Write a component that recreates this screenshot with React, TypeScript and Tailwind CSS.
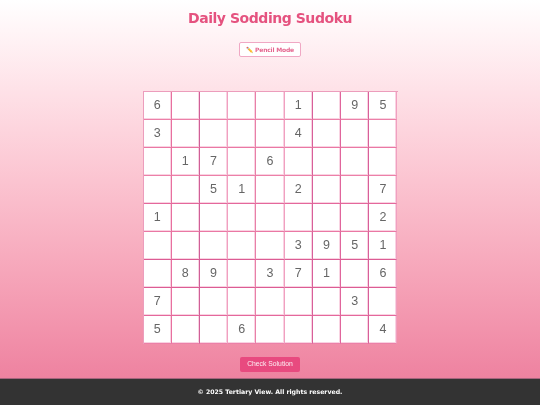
import React from 'react';

const puzzle: string[] = [
  '6....1.95',
  '3....4...',
  '.17.6....',
  '..51.2..7',
  '1.......2',
  '.....3951',
  '.89.371.6',
  '7......3.',
  '5..6....4',
];

// the lines don't all come out the same pink in the reference
const colLine: string[] = [
  'border-r-[#e8709f]',
  'border-r-[#cf5f98]',
  'border-r-[#f0a0c0]',
  'border-r-[#e880a8]',
  'border-r-[#f0a0c0]',
  'border-r-[#d8609a]',
  'border-r-[#e0659c]',
  'border-r-[#d8609a]',
  'border-r-[#f0a0c0]',
];

const rowLine: string[] = [
  'border-b-[#ec80a8]',
  'border-b-[#ea78a4]',
  'border-b-[#ec80a8]',
  'border-b-[#e4689c]',
  'border-b-[#ea78a4]',
  'border-b-[#dc5c94]',
  'border-b-[#dc5c94]',
  'border-b-[#e4689c]',
  'border-b-[#ec80a8]',
];

const App: React.FC = () => {
  return (
    <div className="h-[405px] flex flex-col overflow-hidden will-change-transform [font-family:'Liberation_Sans',sans-serif]">
      <main className="h-[378px] flex flex-col items-center bg-gradient-to-b from-white to-[#ee82a0]">
        <h1 className="mt-[8px] h-[20px] leading-[20px] text-[14px] font-bold tracking-[-0.45px] text-[#e5527f] [font-family:'DejaVu_Sans',sans-serif]">
          Daily Sodding Sudoku
        </h1>
        <button
          type="button"
          className="mt-[14px] w-[62px] h-[15px] flex items-center justify-center gap-[2px] rounded-[2px] border border-[#f0a8c4] bg-white text-[6px] font-bold text-[#e5668f] [font-family:'DejaVu_Sans',sans-serif]"
        >
          <span>✏️</span>
          <span className="tracking-[-0.2px]">Pencil Mode</span>
        </button>
        <div className="mt-[34px] grid grid-cols-9 grid-rows-[repeat(9,28px)] w-[255px] h-[253px] border-t border-l border-[#ec9dbc]">
          {puzzle.map((row, r) =>
            row.split('').map((ch, c) => (
              <div
                key={`${r}-${c}`}
                className={`flex items-center justify-center bg-white border-r border-b shadow-[inset_-1px_-1px_0_#f9d3e2] ${rowLine[r]} ${colLine[c]} text-[12.5px] text-[#666666]`}
              >
                {ch === '.' ? '' : ch}
              </div>
            )),
          )}
        </div>
        <button
          type="button"
          className="mt-[13px] w-[60px] h-[15px] flex items-center justify-center rounded-[2px] bg-[#e84a7f] text-[6.8px] text-white/90"
        >
          Check Solution
        </button>
      </main>
      <footer className="h-[27px] flex items-center justify-center border-t border-t-[#a5647c] bg-[#333333] text-[6.2px] font-bold text-white [font-family:'DejaVu_Sans',sans-serif]">
        © 2025 Tertiary View. All rights reserved.
      </footer>
    </div>
  );
};

export default App;
